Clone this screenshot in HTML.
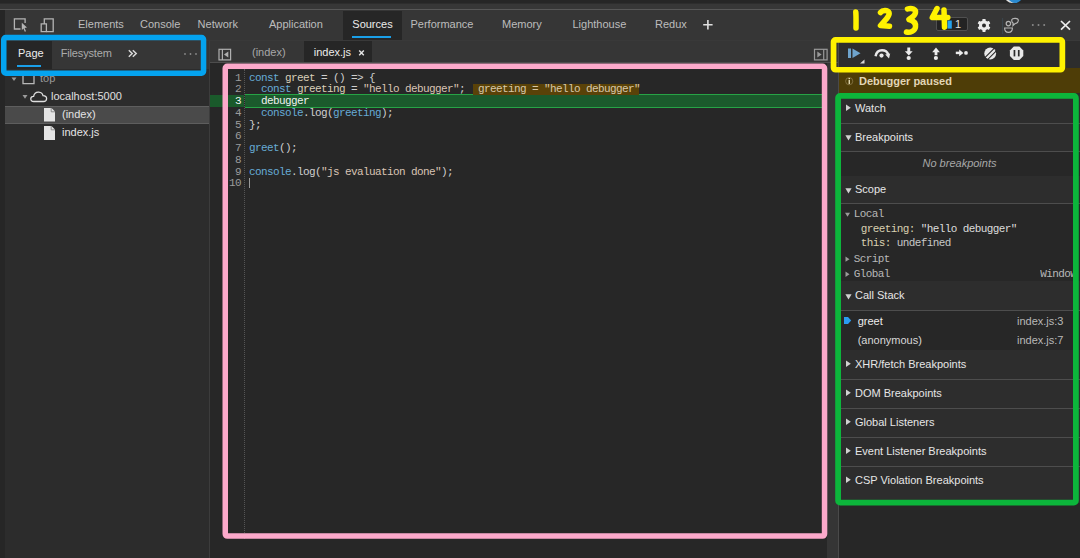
<!DOCTYPE html>
<html><head><meta charset="utf-8">
<style>
html,body{margin:0;padding:0}
body{width:1080px;height:558px;overflow:hidden;position:relative;background:#272727;font-family:"Liberation Sans",sans-serif;font-size:11px;color:#bdbdbd}
.a{position:absolute}
.m{font-family:"Liberation Mono",monospace;font-size:11px;letter-spacing:-0.6px;white-space:pre}
.t{white-space:nowrap;line-height:1}
</style></head><body>
<!-- background layers -->
<div class="a" style="left:0;top:0;width:1080px;height:3px;background:#262626"></div>
<div class="a" style="left:0;top:3px;width:1080px;height:1px;background:#2d2d2d"></div>
<div class="a" style="left:0;top:4px;width:1080px;height:5px;background:#373737"></div>
<div class="a" style="left:0;top:9px;width:1080px;height:1px;background:#585858"></div>
<div class="a" style="left:0;top:10px;width:5px;height:548px;background:#262626"></div>
<div class="a" style="left:5px;top:10px;width:1075px;height:30px;background:#363636"></div>
<div class="a" style="left:5px;top:40px;width:1075px;height:1px;background:#393939"></div>
<!-- sidebar -->
<div class="a" style="left:5px;top:41px;width:204px;height:517px;background:#2c2c2c"></div>
<div class="a" style="left:209px;top:41px;width:1px;height:517px;background:#3c3c3c"></div>
<div class="a" style="left:5px;top:41px;width:204px;height:28px;background:#363636"></div>
<!-- editor -->
<div class="a" style="left:210px;top:41px;width:629px;height:21px;background:#363636"></div>
<div class="a" style="left:210px;top:62px;width:629px;height:1px;background:#4d4d4d"></div>
<div class="a" style="left:210px;top:63px;width:617px;height:495px;background:#272727"></div>
<div class="a" style="left:827px;top:63px;width:11px;height:495px;background:#353535"></div>
<div class="a" style="left:838px;top:41px;width:1px;height:517px;background:#4a4a4a"></div>
<!-- right panel -->
<div class="a" style="left:839px;top:41px;width:241px;height:27px;background:#2d2d2d"></div>
<div class="a" style="left:839px;top:68px;width:241px;height:25px;background:#4e3d07"></div>
<div class="a" style="left:839px;top:93px;width:241px;height:465px;background:#272727"></div>

<!-- MAIN TOOLBAR -->
<svg class="a" style="left:0;top:10px" width="70" height="30" viewBox="0 10 70 30">
<g fill="none" stroke="#b4b4b4" stroke-width="1.3">
<path d="M20.5 29 H14.4 V18.9 H25.1 V23"/>
<path d="M41.2 23.9 H46.4 V31.6 H41.2 Z"/>
<path d="M44.3 23.9 V18.9 H53.2 V31.6 H46.4"/>
</g>
<path d="M21.8 22.8 L27 27.6 L24.6 28 L26 31.2 L24.8 31.7 L23.4 28.6 L21.8 30.2 Z" fill="#b4b4b4"/>
</svg>
<div class="a" style="left:342.7px;top:10.7px;width:59.3px;height:29.3px;background:#262626"></div>
<div class="a" style="left:351.7px;top:36.3px;width:39.6px;height:2px;background:#1a9fe8"></div>
<div class="a t" style="left:78px;top:18.7px">Elements</div>
<div class="a t" style="left:140px;top:18.7px">Console</div>
<div class="a t" style="left:197.6px;top:18.7px">Network</div>
<div class="a t" style="left:269px;top:18.7px">Application</div>
<div class="a t" style="left:352.3px;top:18.7px;color:#ececec">Sources</div>
<div class="a t" style="left:410.5px;top:18.7px">Performance</div>
<div class="a t" style="left:502px;top:18.7px">Memory</div>
<div class="a t" style="left:572.5px;top:18.7px">Lighthouse</div>
<div class="a t" style="left:655px;top:18.7px">Redux</div>
<svg class="a" style="left:700px;top:15px" width="16" height="20" viewBox="700 15 16 20">
<path d="M703.2 24.8 H712.6 M707.9 20.1 V29.5" stroke="#e0e0e0" stroke-width="1.6"/>
</svg>
<!-- badge -->
<div class="a" style="left:935.7px;top:17.3px;width:30px;height:12px;background:#232323;border:1px solid #505050;border-radius:2px"></div>
<svg class="a" style="left:940px;top:15px" width="140" height="22" viewBox="940 15 140 22">
<path d="M947.5 20.5 H951.8 V28.6 H947.5 Z" fill="#23a2f0"/>
<g fill="#ececec"><circle cx="984" cy="25.4" r="5"/><rect x="982.4" y="18.9" width="3.2" height="4" rx="0.6" transform="rotate(0 984 25.4)"/><rect x="982.4" y="18.9" width="3.2" height="4" rx="0.6" transform="rotate(60 984 25.4)"/><rect x="982.4" y="18.9" width="3.2" height="4" rx="0.6" transform="rotate(120 984 25.4)"/><rect x="982.4" y="18.9" width="3.2" height="4" rx="0.6" transform="rotate(180 984 25.4)"/><rect x="982.4" y="18.9" width="3.2" height="4" rx="0.6" transform="rotate(240 984 25.4)"/><rect x="982.4" y="18.9" width="3.2" height="4" rx="0.6" transform="rotate(300 984 25.4)"/></g><circle cx="984" cy="25.4" r="2" fill="#2a2a2a"/>
<g fill="none" stroke="#b4b4b4" stroke-width="1.2">
<circle cx="1008.4" cy="23.6" r="2.2"/>
<path d="M1011.8 19.6 Q1012.3 18.2 1015.3 18.3 Q1018.5 18.5 1018.3 20.8 Q1018 23.4 1015.2 23.5 L1013 25.5 L1013.2 23.2 Q1011.4 22.3 1011.8 19.6Z"/>
<path d="M1004.6 28 H1012.4 Q1012.4 32.4 1008.5 32.4 Q1004.6 32.4 1004.6 28 Z"/>
</g>
<rect x="1002.3" y="18" width="0.8" height="16" fill="#3d4a55"/>
<g fill="#8a8a8a"><circle cx="1032.8" cy="25" r="1"/><circle cx="1038.5" cy="25" r="1"/><circle cx="1044.2" cy="25" r="1"/></g>
<path d="M1061 21 L1070 29.7 M1070 21 L1061 29.7" stroke="#ececec" stroke-width="1.7"/>
</svg>
<div class="a t" style="left:955px;top:19px;color:#e0e0e0">1</div>
<!-- avatar bit top -->
<div class="a" style="left:1008px;top:-10px;width:14px;height:13px;border-radius:50%;background:#2a8ad0;box-shadow:-3px 0 0 #ddd"></div>

<!-- SIDEBAR -->
<div class="a" style="left:6px;top:41px;width:46px;height:28px;background:#262626"></div>
<div class="a" style="left:17.3px;top:65.3px;width:24px;height:1.8px;background:#1a9fe8"></div>
<div class="a t" style="left:18px;top:47.7px;color:#ececec">Page</div>
<div class="a t" style="left:60.7px;top:47.7px;color:#ababab;letter-spacing:-0.15px">Filesystem</div>
<svg class="a" style="left:120px;top:41px" width="90" height="28" viewBox="120 41 90 28">
<path d="M128.8 50.3 L132.2 53.5 L128.8 56.7 M132.8 50.3 L136.2 53.5 L132.8 56.7" fill="none" stroke="#d8d8d8" stroke-width="1.5"/>
<g fill="#8a8a8a"><circle cx="185" cy="54" r="0.9"/><circle cx="190.5" cy="54" r="0.9"/><circle cx="196" cy="54" r="0.9"/></g>
</svg>
<!-- tree -->
<div class="a" style="left:5px;top:106px;width:204px;height:17.5px;background:#4a4a4a;box-sizing:border-box;border-top:1px solid #5e5e5e;border-bottom:1px solid #5e5e5e"></div>
<svg class="a" style="left:5px;top:69px" width="60" height="75" viewBox="5 69 60 75">
<path d="M11.5 77.5 H16.5 L14 81 Z" fill="#9a9a9a"/>
<path d="M23 73 V83.6 H34 V73" fill="none" stroke="#b8b8b8" stroke-width="1.3"/>
<path d="M22.5 95 H27.5 L25 98.8 Z" fill="#9a9a9a"/>
<path d="M33.8 101.5 Q30.6 101.5 30.8 98.6 Q31.1 96.2 33.6 96.4 Q34.5 92 38.7 92.2 Q42.4 92.5 43 95.7 Q46.6 95.8 46.6 98.7 Q46.4 101.5 43.5 101.5 Z" fill="none" stroke="#e0e0e0" stroke-width="1.3"/>
<path d="M44 108 H51.5 L55 111.5 V121.5 H44 Z" fill="#e4e4e4"/>
<path d="M51.2 108 V111.8 H55" fill="none" stroke="#777" stroke-width="0.8"/>
<path d="M44 126 H51.5 L55 129.5 V140 H44 Z" fill="#e4e4e4"/>
<path d="M51.2 126 V129.8 H55" fill="none" stroke="#777" stroke-width="0.8"/>
</svg>
<div class="a t" style="left:40px;top:73px;color:#9a9a9a">top</div>
<div class="a t" style="left:51px;top:90.7px;color:#e0e0e0">localhost:5000</div>
<div class="a t" style="left:62px;top:109.2px;color:#e4e4e4">(index)</div>
<div class="a t" style="left:62px;top:127.2px;color:#e4e4e4">index.js</div>

<!-- EDITOR TABS -->
<svg class="a" style="left:210px;top:41px" width="630" height="22" viewBox="210 41 630 22">
<g fill="none" stroke="#b0b0b0" stroke-width="1.2"><rect x="219" y="49.3" width="11.6" height="10.6"/><path d="M222.4 49.3 V59.9"/></g>
<path d="M228.3 51.6 V57.6 L224 54.6 Z" fill="#b0b0b0"/>
<g fill="none" stroke="#9a9a9a" stroke-width="1.2"><rect x="814.5" y="49.3" width="12.6" height="10.6"/><path d="M823.7 49.3 V59.9"/></g>
<path d="M817.3 51.6 V57.6 L821.6 54.6 Z" fill="#9a9a9a"/>
<path d="M359.2 50.5 L363.8 55.3 M363.8 50.5 L359.2 55.3" stroke="#e4e4e4" stroke-width="1.4"/>
</svg>
<div class="a" style="left:303.75px;top:41px;width:68.25px;height:21px;background:#262626"></div>
<svg class="a" style="left:355px;top:47px" width="12" height="12" viewBox="355 47 12 12"><path d="M359.2 50.5 L363.8 55.3 M363.8 50.5 L359.2 55.3" stroke="#e4e4e4" stroke-width="1.4"/></svg>
<div class="a t" style="left:252px;top:47.2px;color:#a8a8a8">(index)</div>
<div class="a t" style="left:313.75px;top:47.2px;color:#ececec">index.js</div>
<!-- EDITOR CONTENT -->
<div class="a" style="left:210px;top:95px;width:34px;height:12px;background:#1a5a2b"></div>
<div class="a" style="left:245px;top:94px;width:582px;height:14px;background:#1b5a2c;box-sizing:border-box;border-top:1px solid #27a346;border-bottom:1px solid #27a346"></div>
<div class="a" style="left:244px;top:69px;width:0;height:470px;border-left:1px dotted #555"></div>
<div class="a" style="left:473px;top:83.6px;width:166px;height:11.3px;background:#5a4208"></div>
<div class="a m" style="left:217px;top:72.70px;width:24px;text-align:right;line-height:11.75px;color:#9c9c9c">1</div>
<div class="a m" style="left:249px;top:72.70px;line-height:11.75px"><span style="color:#66abd5">const</span> <span style="color:#d9cfb8">greet</span><span style="color:#cfcfcf"> = () =&gt; {</span></div>
<div class="a m" style="left:217px;top:84.45px;width:24px;text-align:right;line-height:11.75px;color:#9c9c9c">2</div>
<div class="a m" style="left:249px;top:84.45px;line-height:11.75px">  <span style="color:#66abd5">const</span> <span style="color:#d9cfb8">greeting</span><span style="color:#cfcfcf"> = </span><span style="color:#d9c4b4">"hello debugger"</span><span style="color:#cfcfcf">;</span></div>
<div class="a m" style="left:217px;top:96.20px;width:24px;text-align:right;line-height:11.75px;color:#f4f4f4">3</div>
<div class="a m" style="left:249px;top:96.20px;line-height:11.75px">  <span style="color:#f0f0f0">debugger</span></div>
<div class="a m" style="left:217px;top:107.95px;width:24px;text-align:right;line-height:11.75px;color:#9c9c9c">4</div>
<div class="a m" style="left:249px;top:107.95px;line-height:11.75px">  <span style="color:#66abd5">console</span><span style="color:#cfcfcf">.log(</span><span style="color:#66abd5">greeting</span><span style="color:#cfcfcf">);</span></div>
<div class="a m" style="left:217px;top:119.70px;width:24px;text-align:right;line-height:11.75px;color:#9c9c9c">5</div>
<div class="a m" style="left:249px;top:119.70px;line-height:11.75px"><span style="color:#cfcfcf">};</span></div>
<div class="a m" style="left:217px;top:131.45px;width:24px;text-align:right;line-height:11.75px;color:#9c9c9c">6</div>
<div class="a m" style="left:249px;top:131.45px;line-height:11.75px"></div>
<div class="a m" style="left:217px;top:143.20px;width:24px;text-align:right;line-height:11.75px;color:#9c9c9c">7</div>
<div class="a m" style="left:249px;top:143.20px;line-height:11.75px"><span style="color:#66abd5">greet</span><span style="color:#cfcfcf">();</span></div>
<div class="a m" style="left:217px;top:154.95px;width:24px;text-align:right;line-height:11.75px;color:#9c9c9c">8</div>
<div class="a m" style="left:249px;top:154.95px;line-height:11.75px"></div>
<div class="a m" style="left:217px;top:166.70px;width:24px;text-align:right;line-height:11.75px;color:#9c9c9c">9</div>
<div class="a m" style="left:249px;top:166.70px;line-height:11.75px"><span style="color:#66abd5">console</span><span style="color:#cfcfcf">.log(</span><span style="color:#d9c4b4">"js evaluation done"</span><span style="color:#cfcfcf">);</span></div>
<div class="a m" style="left:217px;top:178.45px;width:24px;text-align:right;line-height:11.75px;color:#9c9c9c">10</div>
<div class="a m" style="left:249px;top:178.45px;line-height:11.75px"></div>
<div class="a m" style="left:478px;top:84.45px;line-height:11.75px;color:#d8c8a8">greeting = "hello debugger"</div>
<div class="a" style="left:249px;top:178px;width:1px;height:10px;background:#999"></div>
<!-- RIGHT PANEL -->
<svg class="a" style="left:839px;top:41px" width="241" height="27" viewBox="839 41 241 27">
<rect x="848" y="48.5" width="3" height="9.5" fill="#6ea3cc"/>
<path d="M852.5 48.5 L860.5 53.25 L852.5 58 Z" fill="#6ea3cc"/>
<path d="M860 63.5 L864.5 59.5 V63.5 Z" fill="#d8d8d8"/>
<path d="M875.6 56.3 Q876.6 50.3 882 50.3 Q886.8 50.3 888.3 54.6" fill="none" stroke="#e8e8e8" stroke-width="2.5"/>
<path d="M885.2 54.6 L890.2 53.4 L889 58.4 Z" fill="#e4e4e4"/>
<circle cx="881.5" cy="55.6" r="2.1" fill="#e8e8e8"/>
<rect x="907.3" y="47.5" width="2.9" height="4.5" fill="#ececec"/>
<path d="M904.9 51.3 H912.7 L908.8 55.4 Z" fill="#ececec"/>
<circle cx="908.7" cy="58" r="2.1" fill="#ececec"/>
<rect x="934.6" y="51.5" width="2.8" height="3.7" fill="#ececec"/>
<path d="M932.2 52.2 H939.8 L936 47.6 Z" fill="#ececec"/>
<circle cx="935.9" cy="58" r="2.1" fill="#ececec"/>
<path d="M955.8 52.9 H960" stroke="#ececec" stroke-width="2.5"/>
<path d="M959.2 49.5 V56.3 L963.4 52.9 Z" fill="#ececec"/>
<circle cx="966" cy="52.9" r="1.9" fill="#ececec"/>
<circle cx="990.2" cy="53.5" r="5.9" fill="#e8e8e8"/>
<path d="M983.2 59.3 L995.2 47.3 M985.6 61.7 L997.6 49.7" stroke="#2d2d2d" stroke-width="1.1"/>
<path d="M1013.8 46.5 H1019.4 L1023.3 50.4 V56 L1019.4 59.9 H1013.8 L1009.9 56 V50.4 Z" fill="#e8e8e8"/>
<rect x="1013.6" y="50" width="1.7" height="6.4" fill="#2d2d2d"/>
<rect x="1017.9" y="50" width="1.7" height="6.4" fill="#2d2d2d"/>
</svg>
<svg class="a" style="left:839px;top:68px" width="30" height="25" viewBox="839 68 30 25">
<circle cx="849.2" cy="81.2" r="3.6" fill="none" stroke="#8a7a4a" stroke-width="0.8"/>
<rect x="848.6" y="80" width="1.3" height="4" fill="#f0e6c0"/><rect x="848.6" y="78" width="1.3" height="1.2" fill="#f0e6c0"/>
</svg>
<div class="a t" style="left:859px;top:76.2px;font-weight:bold;color:#e2d6b6">Debugger paused</div>
<div class="a" style="left:839px;top:93px;width:241px;height:30px;background:#2d2d2d"></div>
<div class="a" style="left:839px;top:123px;width:241px;height:1px;background:#4d4d4d"></div>
<svg class="a" style="left:844px;top:103px" width="10" height="10" viewBox="0 0 10 10"><path d="M2 1.6 L6.8 4.8 L2 8 Z" fill="#d0d0d0"/></svg>
<div class="a t" style="left:855px;top:102.7px;color:#e6e6e6">Watch</div>
<div class="a" style="left:839px;top:124px;width:241px;height:27px;background:#2d2d2d"></div>
<div class="a" style="left:839px;top:151px;width:241px;height:1px;background:#4d4d4d"></div>
<svg class="a" style="left:844px;top:132.4px" width="10" height="10" viewBox="0 0 10 10"><path d="M1.4 3.2 H7.6 L4.5 8.4 Z" fill="#d0d0d0"/></svg>
<div class="a t" style="left:855px;top:132.1px;color:#e6e6e6">Breakpoints</div>
<div class="a t" style="left:839px;width:241px;text-align:center;top:158.4px;font-style:italic;color:#a8a8a8">No breakpoints</div>
<div class="a" style="left:839px;top:175.5px;width:241px;height:27.5px;background:#2d2d2d"></div>
<div class="a" style="left:839px;top:203.0px;width:241px;height:1px;background:#4d4d4d"></div>
<svg class="a" style="left:844px;top:184.7px" width="10" height="10" viewBox="0 0 10 10"><path d="M1.4 3.2 H7.6 L4.5 8.4 Z" fill="#d0d0d0"/></svg>
<div class="a t" style="left:855px;top:184.4px;color:#e6e6e6">Scope</div>
<div class="a" style="left:839px;top:281px;width:241px;height:28.5px;background:#2d2d2d"></div>
<div class="a" style="left:839px;top:309.5px;width:241px;height:1px;background:#4d4d4d"></div>
<svg class="a" style="left:844px;top:290.5px" width="10" height="10" viewBox="0 0 10 10"><path d="M1.4 3.2 H7.6 L4.5 8.4 Z" fill="#d0d0d0"/></svg>
<div class="a t" style="left:855px;top:290.2px;color:#e6e6e6">Call Stack</div>
<div class="a" style="left:839px;top:350px;width:241px;height:29px;background:#2d2d2d"></div>
<div class="a" style="left:839px;top:379px;width:241px;height:1px;background:#4d4d4d"></div>
<svg class="a" style="left:844px;top:359px" width="10" height="10" viewBox="0 0 10 10"><path d="M2 1.6 L6.8 4.8 L2 8 Z" fill="#d0d0d0"/></svg>
<div class="a t" style="left:855px;top:358.7px;color:#e6e6e6">XHR/fetch Breakpoints</div>
<div class="a" style="left:839px;top:380px;width:241px;height:28px;background:#2d2d2d"></div>
<div class="a" style="left:839px;top:408px;width:241px;height:1px;background:#4d4d4d"></div>
<svg class="a" style="left:844px;top:388px" width="10" height="10" viewBox="0 0 10 10"><path d="M2 1.6 L6.8 4.8 L2 8 Z" fill="#d0d0d0"/></svg>
<div class="a t" style="left:855px;top:387.7px;color:#e6e6e6">DOM Breakpoints</div>
<div class="a" style="left:839px;top:409px;width:241px;height:28px;background:#2d2d2d"></div>
<div class="a" style="left:839px;top:437px;width:241px;height:1px;background:#4d4d4d"></div>
<svg class="a" style="left:844px;top:417px" width="10" height="10" viewBox="0 0 10 10"><path d="M2 1.6 L6.8 4.8 L2 8 Z" fill="#d0d0d0"/></svg>
<div class="a t" style="left:855px;top:416.7px;color:#e6e6e6">Global Listeners</div>
<div class="a" style="left:839px;top:438px;width:241px;height:27.5px;background:#2d2d2d"></div>
<div class="a" style="left:839px;top:465.5px;width:241px;height:1px;background:#4d4d4d"></div>
<svg class="a" style="left:844px;top:446px" width="10" height="10" viewBox="0 0 10 10"><path d="M2 1.6 L6.8 4.8 L2 8 Z" fill="#d0d0d0"/></svg>
<div class="a t" style="left:855px;top:445.7px;color:#e6e6e6">Event Listener Breakpoints</div>
<div class="a" style="left:839px;top:466.5px;width:241px;height:36px;background:#2d2d2d"></div>
<svg class="a" style="left:844px;top:475px" width="10" height="10" viewBox="0 0 10 10"><path d="M2 1.6 L6.8 4.8 L2 8 Z" fill="#d0d0d0"/></svg>
<div class="a t" style="left:855px;top:474.7px;color:#e6e6e6">CSP Violation Breakpoints</div>
<svg class="a" style="left:839px;top:204px" width="20" height="80" viewBox="839 204 20 80"><path d="M845 212.8 H850 L847.5 216.8 Z" fill="#9a9a9a"/><path d="M845.5 256.6 L849.5 259.15 L845.5 261.7 Z" fill="#9a9a9a"/><path d="M845.5 271.4 L849.5 274.2 L845.5 277 Z" fill="#9a9a9a"/></svg>
<div class="a m" style="left:853.8px;top:209.2px;line-height:11px;color:#b8b8b8">Local</div>
<div class="a m" style="left:860.8px;top:224.3px;line-height:11px;color:#d0d0d0"><span style="color:#d9cfb0">greeting:</span> <span style="color:#dcdcdc">"hello debugger"</span></div>
<div class="a m" style="left:860.8px;top:238.2px;line-height:11px;color:#d0d0d0"><span style="color:#d9cfb0">this:</span> <span style="color:#c8c8c8">undefined</span></div>
<div class="a m" style="left:853.8px;top:253.7px;line-height:11px;color:#b8b8b8">Script</div>
<div class="a m" style="left:853.8px;top:268.8px;line-height:11px;color:#b8b8b8">Global</div>
<div class="a" style="left:1040.3px;top:267.8px;width:32.7px;height:14px;overflow:hidden"><div class="m" style="position:absolute;left:0;top:1px;line-height:11px;color:#b8b8b8">Window</div></div>
<svg class="a" style="left:842px;top:314px" width="12" height="12" viewBox="842 314 12 12"><path d="M844 317 H848 L851.2 320.5 L848 324 H844 Z" fill="#2b9bf0"/></svg>
<div class="a t" style="left:857.7px;top:315.8px;color:#ececec">greet</div>
<div class="a t" style="left:857.7px;top:335.3px;color:#d8d8d8">(anonymous)</div>
<div class="a t" style="right:16.5px;top:315.8px;color:#b8b8b8">index.js:3</div>
<div class="a t" style="right:16.5px;top:335.3px;color:#b8b8b8">index.js:7</div>
<!-- ANNOTATIONS -->
<svg class="a" style="left:0;top:0" width="1080" height="558" viewBox="0 0 1080 558">
<g fill="none" stroke="#fff200" stroke-width="5.5" stroke-linecap="round" stroke-linejoin="round">
<path d="M855.8 12 C856.2 17 856 23 856 27.9"/>
<path d="M880.5 12.5 C882.5 10 887.5 9.5 889 12.5 C890 15 887 18.5 880.5 25.5 L889.5 26.2"/>
<path d="M907.5 9 C912 7.5 916 9.5 915.5 12.5 C915 16 911 18 909 19.5 C913 20.5 916 23 915.5 27 C915 31 910 33 906.5 32"/>
<path d="M937 8.5 L932.3 17.5 L947.8 17.5 M944 10 L944.5 27.2"/>
</g>
</svg>

<svg class="a" style="left:0;top:0" width="1080" height="558" viewBox="0 0 1080 558">
<g fill="none">
<rect x="3.75" y="37.55" width="199.8" height="35.7" rx="2" stroke="#04a3ef" stroke-width="5.5"/>
<rect x="225.25" y="66.25" width="599.3" height="469.8" rx="2" stroke="#fca9cb" stroke-width="5.5"/>
<rect x="833.55" y="39.85" width="228.8" height="29.9" rx="2" stroke="#fff200" stroke-width="5.7"/>
<rect x="838.1" y="95.9" width="237.8" height="406.7" rx="2" stroke="#0cb53b" stroke-width="5.8"/>
</g>
</svg>
</body></html>
